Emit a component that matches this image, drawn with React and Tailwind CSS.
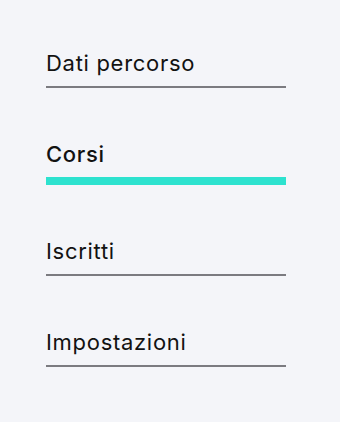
import React, { useState } from "react";

const TABS = ["Dati percorso", "Corsi", "Iscritti", "Impostazioni"];

const App = () => {
  const [active, setActive] = useState("Corsi");

  return (
    <div
      className="min-h-screen bg-[#f4f5f9] pl-[46px] pt-[50px]"
      style={{ fontFamily: "Inter, Roboto, 'Liberation Sans', sans-serif" }}
    >
      <nav className="flex w-[240px] flex-col gap-[53px]">
        {TABS.map((tab) => {
          const isActive = tab === active;
          return (
            <button
              key={tab}
              type="button"
              onClick={() => setActive(tab)}
              className={
                isActive
                  ? "border-b-8 border-[#2de2cf] pb-[10px] text-left text-[22px] leading-[26px] tracking-[0.7px] font-medium text-[#121212]"
                  : "border-b-2 border-[#7b7b80] pb-[10px] text-left text-[22px] leading-[26px] tracking-[0.7px] font-normal text-[#121212]"
              }
            >
              {tab}
            </button>
          );
        })}
      </nav>
    </div>
  );
};

export default App;
